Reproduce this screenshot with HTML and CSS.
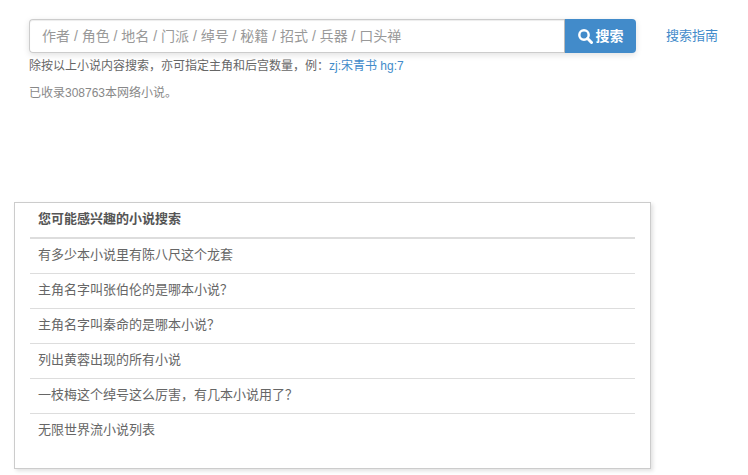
FILE: index.html
```html
<!DOCTYPE html>
<html lang="zh-CN">
<head>
<meta charset="utf-8">
<title>小说搜索</title>
<link rel="stylesheet" href="styles.css">
</head>
<body>
<section class="search">
  <div class="search-row">
    <form class="group">
      <input class="field" type="text" placeholder="作者 / 角色 / 地名 / 门派 / 绰号 / 秘籍 / 招式 / 兵器 / 口头禅">
      <button class="btn" type="button">
        <svg class="icon" viewBox="0 0 16 16" width="15" height="15"><circle cx="6.4" cy="6.4" r="5" fill="none" stroke="#fff" stroke-width="2.6"/><path d="M10.2 10.2 14.4 14.4" stroke="#fff" stroke-width="3.2" stroke-linecap="round"/></svg>
        <span>搜索</span>
      </button>
    </form>
    <a class="guide" href="#">搜索指南</a>
  </div>
  <p class="help">除按以上小说内容搜索，亦可指定主角和后宫数量，例：<a href="#">zj:宋青书 hg:7</a></p>
  <p class="count">已收录308763本网络小说。</p>
</section>
<section class="card">
  <table class="list">
    <thead><tr><th>您可能感兴趣的小说搜索</th></tr></thead>
    <tbody>
      <tr><td>有多少本小说里有陈八尺这个龙套</td></tr>
      <tr><td>主角名字叫张伯伦的是哪本小说？</td></tr>
      <tr><td>主角名字叫秦命的是哪本小说？</td></tr>
      <tr><td>列出黄蓉出现的所有小说</td></tr>
      <tr><td>一枝梅这个绰号这么厉害，有几本小说用了？</td></tr>
      <tr><td>无限世界流小说列表</td></tr>
    </tbody>
  </table>
</section>
</body>
</html>
```
FILE: styles.css
```css
* { box-sizing: border-box; }
html, body { margin: 0; padding: 0; background: #fff; }
body {
  font-family: "Liberation Sans", "Noto Sans CJK SC", sans-serif;
  font-size: 13px;
  line-height: 20px;
  color: #666;
  height: 475px;
  overflow: hidden;
}
a { color: #428bca; text-decoration: none; }
.search { padding: 19px 0 0 29px; height: 202px; }
.search-row { display: flex; align-items: center; }
.group {
  display: flex;
  width: 607px;
  height: 34px;
  margin: 0;
  border-radius: 4px;
  box-shadow: 0 2px 6px rgba(0, 0, 0, .12);
}
.field {
  flex: 1;
  min-width: 0;
  height: 34px;
  padding: 0 12px;
  font: 14px/20px "Liberation Sans", "Noto Sans CJK SC", sans-serif;
  color: #555;
  border: 1px solid #ccc;
  border-right: 0;
  border-radius: 4px 0 0 4px;
  outline: 0;
  background: #fff;
  box-shadow: inset 0 1px 1px rgba(0, 0, 0, .075);
}
.field::placeholder { color: #999; opacity: 1; }
.btn {
  width: 72px;
  height: 34px;
  display: flex;
  align-items: center;
  justify-content: center;
  gap: 3px;
  padding: 0;
  font: 700 14px/20px "Liberation Sans", "Noto Sans CJK SC", sans-serif;
  color: #fff;
  background: #428bca;
  border: 0;
  border-left: 1px solid #bbb;
  border-radius: 0 4px 4px 0;
}
.icon { flex: none; }
.guide { margin-left: 30px; font-size: 13px; }
.help { margin: 3px 0 0; font-size: 12px; line-height: 20px; color: #666; }
.count { margin: 7px 0 0; font-size: 12px; line-height: 20px; color: #888; }
.card {
  width: 637px;
  height: 267px;
  margin-left: 14px;
  padding: 0 15px;
  background: #fff;
  border: 1px solid #ccc;
  box-shadow: 2px 2px 4px rgba(0, 0, 0, .12);
}
.list { width: 100%; border-collapse: collapse; }
.list th, .list td { padding: 6px 8px 8px; text-align: left; font-size: 13px; line-height: 20px; }
.list th { height: 34px; font-weight: 700; color: #555; border-bottom: 2px solid #ddd; }
.list td { height: 35px; border-top: 1px solid #ddd; color: #666; }
.list tbody tr:first-child td { border-top: 0; }
```
